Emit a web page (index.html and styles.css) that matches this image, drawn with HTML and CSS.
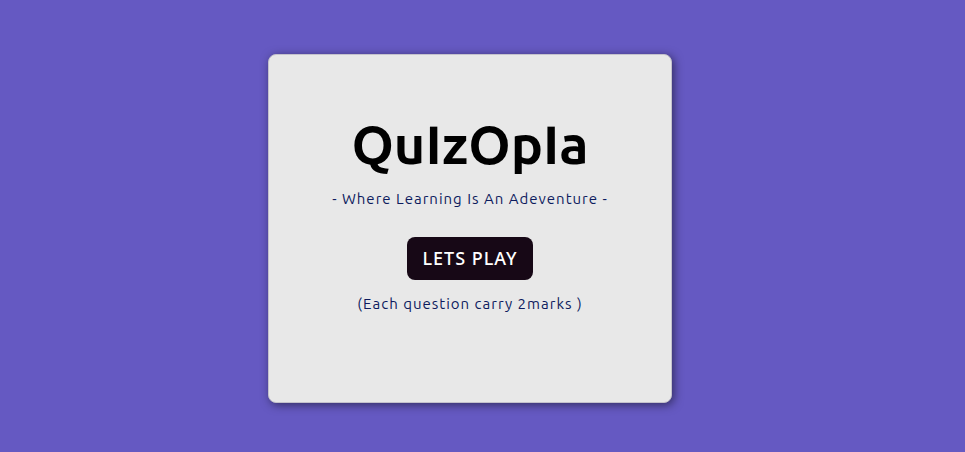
FILE: index.html
```html
<!DOCTYPE html>
<html lang="en">
<head>
<meta charset="utf-8">
<title>QuIzOpIa</title>
<link rel="stylesheet" href="styles.css">
</head>
<body>
<main class="card">
  <h1 class="title">QuIzOpIa</h1>
  <p class="text">- Where Learning Is An Adeventure -</p>
  <button class="play" type="button">LETS PLAY</button>
  <p class="text">(Each question carry 2marks )</p>
</main>
</body>
</html>
```

FILE: styles.css
```css
* {
  box-sizing: border-box;
}

body {
  margin: 0;
  min-height: 100vh;
  padding: 54px 25px 49px 0;
  display: flex;
  justify-content: center;
  align-items: flex-start;
  background: #6559c2;
  font-family: Ubuntu, "Noto Sans", sans-serif;
}

.card {
  width: 43%;
  min-width: 320px;
  padding: 58px 24px 74px;
  display: flex;
  flex-direction: column;
  align-items: center;
  text-align: center;
  background: #e8e8e8;
  border: 1px solid #c4c2cc;
  border-radius: 8px;
  box-shadow: 2px 2px 10px rgba(0, 0, 0, 0.5);
}

.title {
  margin: 0;
  font-size: 54px;
  line-height: 62px;
  font-weight: 700;
  color: #000;
}

.text {
  margin: 12px 0;
  font-size: 15px;
  line-height: 24px;
  letter-spacing: 1px;
  color: #0d1b5e;
}

.play {
  margin: 14px 0 0;
  padding: 10px 15px;
  border: 0;
  border-radius: 8px;
  background: #170816;
  color: #fff;
  font: 500 18px/23px "Noto Sans", sans-serif;
  letter-spacing: 1px;
}
```
